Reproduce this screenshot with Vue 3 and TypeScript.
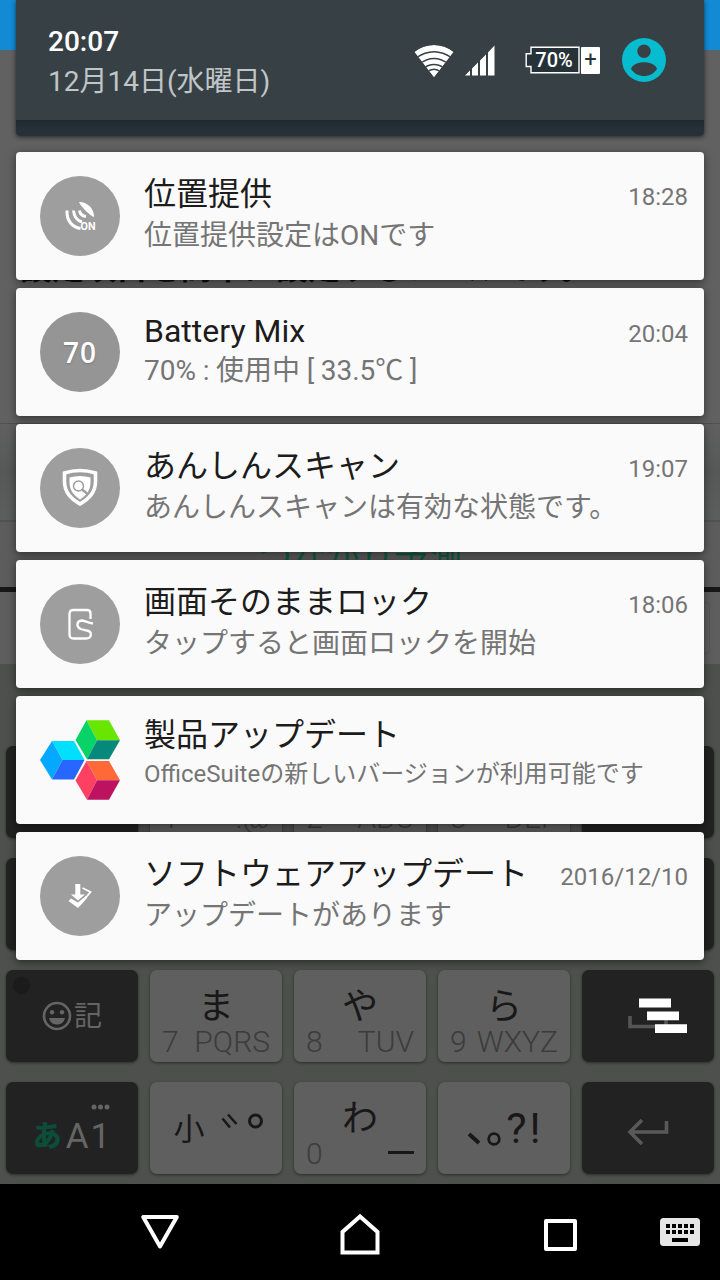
<script setup lang="ts">
interface Notice {
  icon: 'gps' | 'battery' | 'shield' | 'lock' | 'office' | 'update'
  title: string
  text: string
  time?: string
}

interface Key {
  kind: 'kana' | 'dark' | 'symbol' | 'punct' | 'emoji' | 'mode' | 'space' | 'enter'
  main?: string
  digit?: string
  letters?: string
}

const notices: Notice[] = [
  { icon: 'gps', title: '位置提供', text: '位置提供設定はONです', time: '18:28' },
  { icon: 'battery', title: 'Battery Mix', text: '70% : 使用中 [ 33.5℃ ]', time: '20:04' },
  { icon: 'shield', title: 'あんしんスキャン', text: 'あんしんスキャンは有効な状態です。', time: '19:07' },
  { icon: 'lock', title: '画面そのままロック', text: 'タップすると画面ロックを開始', time: '18:06' },
  { icon: 'office', title: '製品アップデート', text: 'OfficeSuiteの新しいバージョンが利用可能です' },
  { icon: 'update', title: 'ソフトウェアアップデート', text: 'アップデートがあります', time: '2016/12/10' },
]

const keys: Key[] = [
  { kind: 'dark' },
  { kind: 'kana', digit: '1', letters: '.@' },
  { kind: 'kana', digit: '2', letters: 'ABC' },
  { kind: 'kana', digit: '3', letters: 'DEF' },
  { kind: 'dark' },
  { kind: 'dark' },
  { kind: 'kana' },
  { kind: 'kana' },
  { kind: 'kana' },
  { kind: 'dark' },
  { kind: 'emoji' },
  { kind: 'kana', main: 'ま', digit: '7', letters: 'PQRS' },
  { kind: 'kana', main: 'や', digit: '8', letters: 'TUV' },
  { kind: 'kana', main: 'ら', digit: '9', letters: 'WXYZ' },
  { kind: 'space' },
  { kind: 'mode' },
  { kind: 'symbol' },
  { kind: 'kana', main: 'わ', digit: '0' },
  { kind: 'punct' },
  { kind: 'enter' },
]

const darkKinds = ['dark', 'emoji', 'mode', 'space', 'enter']
</script>

<template>
  <div class="screen">
    <div class="backdrop">
      <div class="app-bar"></div>
      <div class="app-page"><p>設定項目を簡単に設定するツールです。</p></div>
      <div class="app-row"></div>
      <div class="app-hint"><p>つながり予測</p></div>
      <div class="app-tray"><span></span></div>
      <div class="keyboard">
        <div
          v-for="(key, i) in keys"
          :key="i"
          class="key"
          :class="[key.kind, { black: darkKinds.includes(key.kind) }]"
        >
          <template v-if="key.kind === 'kana'">
            <b>{{ key.main }}</b>
            <div class="hints">
              <span>{{ key.digit }}</span>
              <i v-if="key.digit === '0'"></i>
              <span v-else>{{ key.letters }}</span>
            </div>
          </template>
          <template v-else-if="key.kind === 'emoji'">
            <span class="spot"></span>
            <svg width="30" height="30" viewBox="0 0 30 30">
              <circle cx="15" cy="15" r="13" fill="none" stroke="#656565" stroke-width="2.6" />
              <circle cx="10" cy="11.3" r="2.2" fill="#656565" />
              <circle cx="20" cy="11.3" r="2.2" fill="#656565" />
              <path d="M7 17H23C22 21.5 19 23.5 15 23.5S8 21.5 7 17Z" fill="#656565" />
            </svg>
            <em>記</em>
          </template>
          <template v-else-if="key.kind === 'mode'">
            <svg class="dots" width="20" height="6" viewBox="0 0 20 6">
              <circle cx="3" cy="3" r="2.5" /><circle cx="9.5" cy="3" r="2.5" /><circle cx="16" cy="3" r="2.5" />
            </svg>
            <strong>あ</strong><em>A</em><em>1</em>
          </template>
          <template v-else-if="key.kind === 'symbol'">
            <em>小</em>
            <svg width="42" height="18" viewBox="0 0 42 18" fill="none" stroke="#181818">
              <path d="M1.5 5.5L9 14.5M7 1.5L15.500 11" stroke-width="2.6" />
              <circle cx="34.500" cy="8" r="6" stroke-width="3" />
            </svg>
          </template>
          <template v-else-if="key.kind === 'punct'">
            <svg width="36" height="14" viewBox="0 0 36 14" fill="none" stroke="#181818">
              <path d="M2 2L12 11" stroke-width="4" />
              <circle cx="27" cy="7" r="5.300" stroke-width="2.8" />
            </svg>
            <em>?</em><em>!</em>
          </template>
          <svg v-else-if="key.kind === 'space'" width="42" height="14" viewBox="0 0 42 14">
            <path d="M2 1V11.500H38V1" fill="none" stroke="#555" stroke-width="3.6" />
          </svg>
          <svg v-else-if="key.kind === 'enter'" width="44" height="28" viewBox="0 0 44 28">
            <path d="M40.500 3V14H4M16 2L4 14L16 26" fill="none" stroke="#595959" stroke-width="3.6" />
          </svg>
        </div>
      </div>
    </div>

    <main class="shade">
      <header class="header">
        <div class="header-top">
          <div class="clock">
            <time>20:07</time>
            <span>12月14日(水曜日)</span>
          </div>
          <svg class="wifi" width="40" height="34" viewBox="0 0 40 34">
            <defs><clipPath id="fan"><path d="M20 33.500L0.500 8Q9 1 20 1T39.500 8Z" /></clipPath></defs>
            <g clip-path="url(#fan)">
              <path d="M20 33.500L0 8Q9 1 20 1T40 8Z" fill="#fff" />
              <g fill="none" stroke="#374145" stroke-width="1.500">
                <path d="M2 14Q20 1.500 38 14" /><path d="M6 19.500Q20 9.500 34 19.500" />
                <path d="M9 24.500Q20 16.500 31 24.500" /><path d="M13 28Q20 22.500 27 28" />
              </g>
            </g>
          </svg>
          <svg class="signal" width="30" height="31" viewBox="0 0 30 31" fill="#fff">
            <path d="M0 30.500L5 25.500V30.500ZM7 23.500L13 17.500V30.500H7ZM15 15.500L21 9.500V30.500H15ZM23 7.500L29.500 .5V30.500H23Z" />
          </svg>
          <div class="power">
            <svg width="55" height="28" viewBox="0 0 55 28">
              <path d="M6 1.200H54V26.800H6V20.500H1.200V7.800H6Z" fill="#263238" stroke="#fff" stroke-width="1.400" />
            </svg>
            <span>70%</span>
            <i>+</i>
          </div>
          <svg class="user" width="44" height="44" viewBox="0 0 44 44">
            <circle cx="22" cy="22" r="22" fill="#08bcd0" />
            <circle cx="22" cy="13.300" r="6.700" fill="#374145" />
            <path d="M9 31C10 27 16 24.300 22 24.300S34 27 35 31C32 35.500 27.500 38 22 38S12 35.500 9 31Z" fill="#374145" />
          </svg>
        </div>
      </header>

      <section class="list">
        <article v-for="n in notices" :key="n.title" class="card" :class="n.icon">
          <div class="badge">
            <svg v-if="n.icon === 'gps'" width="80" height="80" viewBox="0 0 80 80">
              <path d="M39 26C47 25.500 54.500 33 54 41C51.500 40.500 41 31.500 39 26Z" fill="#fff" />
              <g fill="none" stroke="#fff" stroke-width="3">
                <path d="M27 34.500C26.500 44 31.500 51 40.500 52.500" />
                <path d="M33.500 34.500C34 40.500 37 44.500 42 46" />
                <path d="M39.500 34.500C40 38 42 40 46 40.500" />
              </g>
              <text x="40.500" y="54" textLength="15" lengthAdjust="spacingAndGlyphs">ON</text>
            </svg>
            <span v-else-if="n.icon === 'battery'">70</span>
            <svg v-else-if="n.icon === 'shield'" width="80" height="80" viewBox="0 0 80 80">
              <path d="M24.500 25.500Q40 20.500 55.500 25.500V34C55.500 45 49 51 40 56.500C31 51 24.500 45 24.500 34Z" transform="translate(0 -.5)" fill="none" stroke="#fff" stroke-width="3.600" />
              <path d="M29.500 29.500Q40 26.500 50.500 29.500V34C50.500 42.500 46.500 47 40 51.500C33.500 47 29.500 42.500 29.500 34Z" fill="#fff" />
              <circle cx="38.500" cy="38" r="5" fill="#fff" stroke="#9e9e9e" stroke-width="1.500" />
              <path d="M42 41.500L47 45.500" stroke="#9e9e9e" stroke-width="2.500" />
            </svg>
            <svg v-else-if="n.icon === 'lock'" width="80" height="80" viewBox="0 0 80 80" fill="none" stroke="#fff" stroke-width="2.300">
              <path d="M50.500 35V29.500Q50.500 26 47 26H33.500Q29.500 26 29.500 30V50.500Q29.500 54.500 33.500 54.500H46C52 54.500 52.500 47.500 47 46.500L40.500 45C36 43 36.500 37 41.500 36.500C44 36.500 47.500 38.500 53 39.500" />
            </svg>
            <svg v-else-if="n.icon === 'office'" width="80" height="80" viewBox="0 0 80 80">
              <path d="M46.500 .3H69L80 20.200H57Z" fill="#69e600" />
              <path d="M46.500 .3L57 20.200L47 39.300L35.500 20Z" fill="#07d367" />
              <path d="M57 20.200H80L69 39.300H47Z" fill="#06887a" />
              <path d="M12 21H34L44.500 40H22.500Z" fill="#00e0fc" />
              <path d="M12 21L22.500 40L12 59.500L0 40Z" fill="#05a8ff" />
              <path d="M22.500 40H44.500L34 59.500H12Z" fill="#2867ff" />
              <path d="M46.500 41H69L80 60.200H57Z" fill="#ff6937" />
              <path d="M46.500 41L57 60.200L47 79.700L35.500 60.500Z" fill="#ff4161" />
              <path d="M57 60.200H80L69 79.700H47Z" fill="#bd125f" />
            </svg>
            <svg v-else width="80" height="80" viewBox="0 0 80 80">
              <path d="M35.300 28H40.300V38.500H45L38 44.500L31 38.500H35.300Z" fill="#fff" />
              <path d="M42.500 32L50.500 36L39.500 49" fill="none" stroke="#fff" stroke-width="1.800" />
              <path d="M28.500 45L31 42.500L38 46.500L46 40L47 42L38 52Z" fill="#fff" />
            </svg>
          </div>
          <div class="body">
            <div class="line">
              <h2>{{ n.title }}</h2>
              <time v-if="n.time">{{ n.time }}</time>
            </div>
            <p>{{ n.text }}</p>
          </div>
        </article>
      </section>
    </main>

    <svg class="clear" width="48" height="36" viewBox="0 0 48 36" fill="#fff">
      <path d="M0 .5H32V9.500H0ZM8 13.500H40V22.300H8ZM16 26.300H48V35H16Z" />
    </svg>

    <nav class="nav">
      <div>
        <svg width="40" height="36" viewBox="0 0 40 36"><path d="M3.200 3H36.800L20 32.500Z" stroke-linejoin="round" /></svg>
      </div>
      <div>
        <svg width="40" height="42" viewBox="0 0 40 42"><path d="M2.500 39.500V19L20 3.500L37.500 19V39.500Z" /></svg>
      </div>
      <div>
        <svg width="34" height="34" viewBox="0 0 34 34"><rect x="3" y="3" width="29" height="28" stroke-linejoin="round" /></svg>
      </div>
      <svg class="ime" width="40" height="28" viewBox="0 0 40 28">
        <rect width="40" height="28" rx="3.500" />
        <path d="M6 8H34M6 14H34" stroke="#000" stroke-width="4" stroke-dasharray="4 2" />
        <path d="M12 22H28" stroke="#000" stroke-width="4" />
      </svg>
    </nav>
  </div>
</template>

<style scoped>
.screen {
  position: relative;
  width: 720px;
  height: 1280px;
  overflow: hidden;
  background: #616161;
  font-family: Roboto, "Noto Sans CJK JP", sans-serif;
  display: flex;
  flex-direction: column;
}
p, h2 { margin: 0; font-weight: 400; }
svg { display: block; flex: none; }
i, em { font-style: normal; }

.backdrop { position: absolute; inset: 0; display: flex; flex-direction: column; }
.app-bar { height: 50px; flex: none; background: #128bd4; }
.app-page { height: 374px; flex: none; box-sizing: border-box; padding: 198px 20px 0; background: #616161; border-bottom: 1px solid #505050; }
.app-page p { font-size: 32px; line-height: 40px; font-weight: 700; color: #0c0c0c; white-space: nowrap; }
.app-row { height: 98px; flex: none; box-sizing: border-box; background: linear-gradient(#606060, #565857 50%, #5c5d5d); border-bottom: 2px solid #505252; }
.app-hint { height: 70px; flex: none; box-sizing: border-box; padding-top: 15px; background: #5c5c5c; border-bottom: 5px solid #171717; text-align: center; }
.app-hint p { font-size: 34px; line-height: 40px; color: #0f5c43; }
.app-tray { height: 72px; flex: none; background: #5e5e5e; display: flex; justify-content: flex-end; align-items: center; }
.app-tray span { width: 60px; height: 50px; margin-right: 10px; border: 1px solid #555; border-radius: 4px; }
.keyboard {
  flex: none;
  height: 520px;
  box-sizing: border-box;
  padding: 82px 6px 10px;
  background: #4e504d;
  display: grid;
  grid-template-columns: repeat(5, 132px);
  grid-auto-rows: 92px;
  column-gap: 12px;
  row-gap: 20px;
}
.key {
  position: relative;
  box-sizing: border-box;
  border-radius: 7px;
  background: #5f5f5f;
  box-shadow: 0 1px 3px rgba(0, 0, 0, .45);
  color: #181818;
  display: flex;
  align-items: center;
  justify-content: center;
}
.key.black { background: #222; color: #656565; }
.key.kana { flex-direction: column; justify-content: flex-start; }
.key b { font-weight: 400; font-size: 36px; line-height: 40px; height: 37px; margin-top: 17px; }
.hints {
  align-self: stretch;
  display: flex;
  justify-content: space-between;
  padding: 0 12px;
  font-size: 30px;
  line-height: 36px;
  font-weight: 300;
  color: #3c3c3c;
}
.hints i { width: 26px; height: 3px; background: #181818; margin-top: 15px; }
.spot { position: absolute; left: 7px; top: 7px; width: 17px; height: 17px; border-radius: 50%; background: #1b1b1b; }
.emoji em { font-size: 28px; line-height: 40px; margin-left: 2px; padding-top: 2px; }
.mode { padding-top: 17px; }
.mode .dots { position: absolute; left: 85px; top: 22px; fill: #656565; }
.mode strong { font-size: 29px; line-height: 40px; font-weight: 900; color: #0b4d38; margin-right: 3px; }
.mode em { font-size: 35px; line-height: 40px; font-weight: 400; margin: 0 1px; }
.symbol { padding-left: 4px; }
.symbol em { font-size: 31px; line-height: 40px; margin-right: 16px; padding-top: 4px; }
.symbol svg { margin-top: -12px; }
.punct em { font-size: 43px; line-height: 48px; margin-left: 3px; }
.punct svg { margin-top: 21px; }
.key.space { padding: 12px 0 0 2px; align-items: center; }
.enter { padding: 8px 0 0; }

.shade { position: relative; padding: 0 16px; }
.header {
  height: 136px;
  border-radius: 0 0 4px 4px;
  background: linear-gradient(#1f292d 120px, #263238 130px);
  box-shadow: 0 1px 5px rgba(0, 0, 0, .6);
}
.header-top { height: 120px; background: #374145; display: flex; align-items: center; padding-right: 38px; }
.clock { flex: 1; display: flex; flex-direction: column; padding-left: 32px; padding-top: 4px; }
.clock time { font-size: 28px; line-height: 40px; font-weight: 500; color: #fff; }
.clock span { font-size: 28px; line-height: 40px; color: #c0c5c8; font-weight: 400; }
.wifi { margin-right: 11px; margin-top: 2px; }
.signal { margin-right: 30px; }
.power { position: relative; display: flex; align-items: center; margin-right: 22px; }
.power span { position: absolute; left: 9px; top: 0; width: 40px; font-size: 20px; line-height: 28px; font-weight: 500; color: #fff; text-align: center; }
.power i { width: 19px; height: 27px; margin-left: 1px; background: #fff; color: #263238; font-size: 22px; line-height: 25px; text-align: center; border-radius: 1px; }

.list { display: flex; flex-direction: column; gap: 8px; margin-top: 16px; }
.card {
  height: 128px;
  box-sizing: border-box;
  padding: 0 16px 0 24px;
  background: #fafafa;
  border-radius: 4px;
  box-shadow: 0 2px 8px rgba(0, 0, 0, .5);
  display: flex;
  gap: 24px;
}
.badge { flex: none; width: 80px; height: 80px; margin-top: 24px; border-radius: 50%; background: #9e9e9e; display: flex; align-items: center; justify-content: center; }
.office .badge { background: none; border-radius: 0; }
.badge span { font-family: "Open Sans", sans-serif; font-size: 28px; line-height: 40px; font-weight: 600; color: #fff; letter-spacing: 1px; text-shadow: 0 1px 2px #777; }
.badge text { font: 700 11px Roboto, sans-serif; fill: #fff; }
.battery .badge { background: #959595; }
.body { flex: 1; min-width: 0; padding-top: 22px; white-space: nowrap; }
.line { display: flex; justify-content: space-between; align-items: baseline; }
.line h2 { font-size: 32px; line-height: 40px; color: #1c1c1c; }
.line time { font-size: 24px; line-height: 30px; color: #757575; }
.body p { font-size: 28px; line-height: 36px; margin-top: 4px; color: #757575; }
.battery .body { padding-top: 23px; }
.battery .body p { margin-top: 2px; word-spacing: -.3px; }
.office .body { padding-top: 19px; }
.office .body p { font-size: 24px; margin-top: 1px; }

.clear { position: absolute; left: 639px; top: 998px; }
.nav { position: absolute; left: 0; right: 0; bottom: 0; height: 96px; background: #000; display: flex; align-items: center; padding-left: 60px; }
.nav div { width: 200px; display: flex; justify-content: center; }
.nav div svg { fill: none; stroke: #fff; stroke-width: 4; }
.nav div:nth-child(2) svg { margin-top: 4px; }
.nav div:nth-child(3) svg { margin-top: 6px; }
.nav .ime { fill: #e6e6e6; }
</style>
